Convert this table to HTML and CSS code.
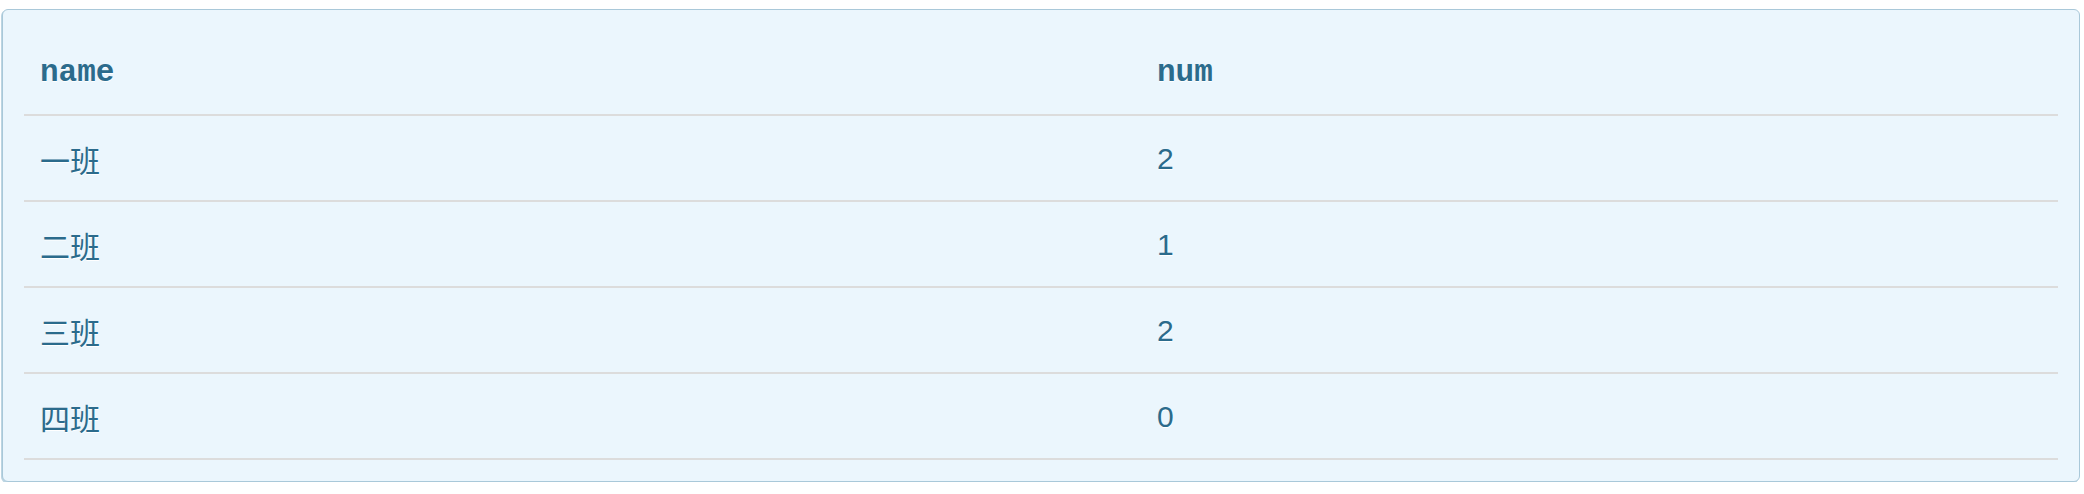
FILE: index.html
```html
<!DOCTYPE html>
<html lang="zh">
<head>
<meta charset="utf-8">
<title>table</title>
<link rel="stylesheet" href="styles.css">
</head>
<body>
<div class="panel">
  <table class="data">
    <thead>
      <tr><th class="col-name">name</th><th>num</th></tr>
    </thead>
    <tbody>
      <tr><td class="cjk">一班</td><td>2</td></tr>
      <tr><td class="cjk">二班</td><td>1</td></tr>
      <tr><td class="cjk">三班</td><td>2</td></tr>
      <tr><td class="cjk">四班</td><td>0</td></tr>
    </tbody>
  </table>
</div>
</body>
</html>
```
FILE: styles.css
```css
html, body {
  margin: 0;
  padding: 0;
  background: #ffffff;
}
body {
  padding: 9px 4px 0 2px;
  font-family: "Liberation Sans", Arial, "Noto Sans CJK SC", sans-serif;
  color: #2b6b8c;
}
.panel {
  background: #ebf6fd;
  border: 1px solid #a9c8d9;
  border-radius: 6px;
  box-shadow: -1px 1px 0 #bcd5e2;
  padding: 20px 21px 21px 21px;
}
.data {
  width: 100%;
  border-collapse: collapse;
  table-layout: fixed;
}
.data th, .data td {
  text-align: left;
  height: 82px;
  padding: 2px 16px 0 16px;
  border-bottom: 2px solid #dcdcdc;
  vertical-align: middle;
  text-shadow: 0 1px 0 #ffffff;
  font-size: 30px;
  font-weight: normal;
}
.data th {
  font-family: "Liberation Mono", "Courier New", monospace;
  font-weight: bold;
  font-size: 31px;
  padding-top: 0;
  height: 84px;
}
.col-name {
  width: 1085px;
}
.cjk {
  font-family: "Noto Sans CJK SC", sans-serif;
  font-weight: 300;
}
```
